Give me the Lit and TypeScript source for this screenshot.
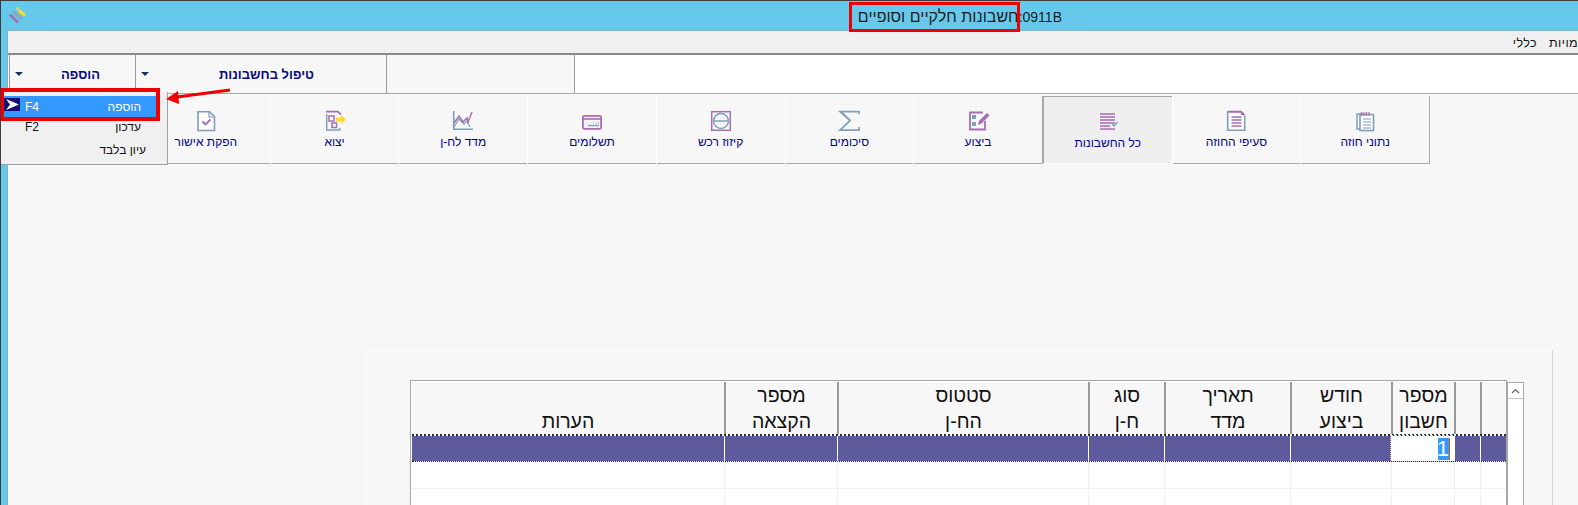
import { LitElement, html, css, svg } from "lit";
import { customElement } from "lit/decorators.js";

const B = "#7f9fb8";
const P = "#a56fb0";
const Y = "#ffd82a";

const icons = [
  svg`<rect x="4" y="6" width="5" height="15" fill="none" stroke="${B}" stroke-width="1.5"/><rect x="7" y="6.5" width="13.5" height="16" fill="#fff" stroke="${B}" stroke-width="1.6"/><path d="M8.5 4v4M11 4v4M13.5 4v4M16 4v4" stroke="${P}" stroke-width="1.2"/><path d="M10 11h8M10 14h8M10 17h8M10 20h8" stroke="${B}" stroke-width="1.2"/>`,
  svg`<path d="M3.7 3v19.3h17V8" fill="#fff" stroke="${B}" stroke-width="1.6"/><path d="M4 3.7h13l3.5 3.5" fill="none" stroke="${P}" stroke-width="2"/><path d="M17 3l4 4h-4z" fill="${P}"/><path d="M7.5 9h10M7.5 12h10M7.5 15h10M7.5 18h10" stroke="${P}" stroke-width="1.5"/>`,
  svg`<path d="M4 6h15M4 9h15M4 12h15M4 15h15M4 18h10M4 21h15" stroke="${P}" stroke-width="1.7"/><path d="M16 16l2 2 3.5-4" fill="none" stroke="${B}" stroke-width="1.4"/>`,
  svg`<path d="M17 4.5H4v17h15V13" fill="none" stroke="${P}" stroke-width="1.8"/><rect x="6" y="7" width="4" height="4" fill="${B}"/><rect x="6" y="14" width="4" height="4" fill="${B}"/><path d="M12 17l1-4 8-8 2.5 2.5-8 8z" fill="${P}"/>`,
  svg`<path d="M22 6V3.7H3l10 9-10 9.4h19V19" fill="none" stroke="${B}" stroke-width="1.7"/><path d="M5 4l9 8.5" stroke="${B}" stroke-width="1"/>`,
  svg`<rect x="2.7" y="3.7" width="18.6" height="18.6" fill="none" stroke="${P}" stroke-width="1.5"/><circle cx="12" cy="13" r="7.5" fill="none" stroke="${B}" stroke-width="1.5"/><path d="M5 13h14" stroke="${B}" stroke-width="1.5"/>`,
  svg`<rect x="2.9" y="7.9" width="18.2" height="13" rx="1.5" fill="#f7f0f8" stroke="${P}" stroke-width="1.8"/><path d="M3 11h18" stroke="${P}" stroke-width="1.6"/><path d="M8 17.5h11" stroke="${B}" stroke-width="1.4"/><path d="M13 15h1M16 15h1M18 15h1" stroke="${B}" stroke-width="1.2"/>`,
  svg`<path d="M2.7 3v18.3H22" fill="none" stroke="${B}" stroke-width="1.6"/><path d="M3 19l5-8 5 5 3-3 3 6" fill="none" stroke="${B}" stroke-width="1.2"/><path d="M3 15l5-7 4 6 4-4 1 4 4-10" fill="none" stroke="${P}" stroke-width="1.5"/>`,
  svg`<path d="M3.7 6v16h13v-2" fill="#f7f7f7" stroke="${B}" stroke-width="1.5"/><path d="M3 3.7h12l3 3" fill="none" stroke="${P}" stroke-width="1.8"/><rect x="6" y="8" width="5" height="5" fill="#fff" stroke="${P}" stroke-width="1.5"/><rect x="9" y="15" width="4.5" height="4.5" fill="#fff" stroke="${P}" stroke-width="1.5"/><path d="M13 9.5h5V7l5 4.5-5 4.5v-2.5h-5z" fill="${Y}"/>`,
  svg`<path d="M4 3.7h11.5l5 5v13.8H4z" fill="#fbfbfb" stroke="${B}" stroke-width="1.6"/><path d="M15 4v5h5.5" fill="none" stroke="${B}" stroke-width="1.2"/><path d="M8.5 13.5l3 3 5-5" fill="none" stroke="${P}" stroke-width="1.8"/>`,
];

const tabs: [string, number][] = [
  ["הפקת אישור", 9],
  ["יצוא", 8],
  ["מדד לח-ן", 7],
  ["תשלומים", 6],
  ["קיזוז רכש", 5],
  ["סיכומים", 4],
  ["ביצוע", 3],
  ["כל החשבונות", 2],
  ["סעיפי החוזה", 1],
  ["נתוני חוזה", 0],
];

const columns = [
  ["", "הערות"],
  ["מספר", "הקצאה"],
  ["סטטוס", "הח-ן"],
  ["סוג", "ח-ן"],
  ["תאריך", "מדד"],
  ["חודש", "ביצוע"],
  ["מספר", "חשבון"],
  ["", ""],
  ["", ""],
];

@customElement("app-root")
export class AppRoot extends LitElement {
  static styles = css`
    :host {
      display: block;
      position: relative;
      width: 1578px;
      height: 505px;
      overflow: hidden;
      background: #66c9ec;
      font-family: "Liberation Sans", Arial, sans-serif;
      box-sizing: border-box;
      border-top: 1px solid #3c3c3c;
      border-left: 1px solid #3c3c3c;
    }
    .titlebar {
      height: 29px;
      display: flex;
      align-items: center;
      position: relative;
    }
    .logo {
      margin-left: 7px;
      width: 20px;
      height: 20px;
      flex: none;
    }
    .title {
      margin-left: 830px;
      width: 204px;
      direction: rtl;
      font-size: 14px;
      line-height: 20px;
      color: #1c1c1c;
      white-space: nowrap;
      padding-top: 2px;
    }
    .title .he { font-size: 16px; }
    .main {
      margin-left: 6px;
      height: 475px;
      background: #f7f7f7;
      border-left: 1px solid #8fb0c4;
      border-top: 1px solid #8fb0c4;
      display: flex;
      flex-direction: column;
    }
    .menubar {
      height: 22px;
      flex: none;
      background: #f0f0f0;
      display: flex;
      justify-content: flex-end;
      align-items: center;
      gap: 12px;
      font-size: 12.5px;
      letter-spacing: 0.4px;
      color: #111;
      padding-top: 2px;
      box-sizing: border-box;
      margin-right: -7px;
    }
    .menubar span { flex: none; white-space: nowrap; }
    .toolbar {
      flex: none;
      display: flex;
      border-top: 2px solid #8a8a8a;
      border-bottom: 1px solid #a8a8a8;
      background: #fff;
      height: 38px;
    }
    .tool {
      flex: none;
      background: #f7f7f7;
      border-left: 1px solid #9a9a9a;
      box-sizing: border-box;
      display: flex;
      align-items: center;
      font-size: 13px;
      font-weight: bold;
      color: #0a0a80;
    }
    .tool.a { margin-left: 1px; width: 126px; }
    .tool.b { width: 251px; }
    .tool.c { width: 189px; border-right: 1px solid #9a9a9a; }
    .tri {
      width: 0;
      height: 0;
      border-left: 4px solid transparent;
      border-right: 4px solid transparent;
      border-top: 4px solid #14365e;
      margin-left: 5px;
      flex: none;
    }
    .tool .lbl { direction: rtl; white-space: nowrap; }
    .tool.a .lbl { margin-left: 38px; }
    .tool.b .lbl { margin-left: 70px; }
    .tabs {
      margin-top: 2px;
      height: 68px;
      flex: none;
      display: flex;
      margin-left: 133px;
      width: 1289px;
      box-sizing: border-box;
      border-bottom: 1px solid #a8a8a8;
      border-right: 1px solid #a8a8a8;
    }
    .tab {
      flex: 1 1 0;
      min-width: 0;
      height: 68px;
      box-sizing: border-box;
      border-left: 1px solid #fff;
      display: flex;
      flex-direction: column;
      align-items: center;
      padding-top: 12px;
      font-size: 12px;
      color: #00008b;
      direction: rtl;
      white-space: nowrap;
    }
    .tab svg { width: 24px; height: 24px; display: block; }
    .tab .t { margin-top: 3px; line-height: 14px; }
    .tab.on {
      background: #efefef;
      border: 1px solid #a8a8a8;
      border-width: 1px 0 0 2px;
      border-bottom: 1px solid #fff;
      padding-top: 11px;
    }
    .tab.on .t { margin-top: 4px; }
    .panel {
      margin: 186px 25px 0 358px;
      flex: 1;
      border-top: 1px solid #fff;
      border-left: 1px solid #fff;
      border-right: 1px solid #d6d6d6;
      padding: 29px 0 0 43px;
      display: flex;
      align-items: flex-start;
      overflow: hidden;
    }
    .grid {
      width: 1097px;
      height: 200px;
      flex: none;
      border: 1px solid #a6a6a6;
      border-bottom: 0;
      padding: 1px 0 0 1px;
      background: #fff;
      box-sizing: border-box;
    }
    .row {
      display: grid;
      grid-template-columns: 312px 113px 251px 76px 126px 101px 63px 26px 26px;
    }
    .hcell {
      height: 52px;
      background: #f7f7f7;
      border-left: 2px solid #999;
      box-sizing: border-box;
      text-align: center;
      direction: rtl;
      color: #111;
      font-size: 19.5px;
      line-height: 26px;
    }
    .hcell:first-child { border-left: 0; }
    .hcell div { height: 26px; }
    .sel {
      height: 28px;
      border-top: 2px dotted #2a2a2a;
      border-bottom: 1px dotted #2a2a2a;
      box-sizing: border-box;
    }
    .scell {
      background: #5d5b9b;
      border-left: 1px solid #fff;
      box-sizing: border-box;
    }
    .scell:first-child { border-left: 0; }
    .scell.cur {
      background: #fff;
      outline: 1px dotted #e8d800;
      direction: rtl;
      padding-right: 4px;
      display: flex;
      align-items: center;
      justify-content: flex-start;
    }
    .cursel {
      background: #3399ff;
      color: #fff;
      font-size: 22px;
      line-height: 22px;
      height: 22px;
      width: 11px;
      text-align: center;
      border-right: 1px solid #d06000;
    }
    .ecell {
      height: 27px;
      background: #fff;
      border-left: 1px solid #efefef;
      border-bottom: 1px solid #efefef;
      box-sizing: border-box;
    }
    .ecell:first-child { border-left: 0; }
    .scroll {
      width: 17px;
      height: 200px;
      flex: none;
      margin-top: 2px;
      box-sizing: border-box;
      border: 1px solid #a6a6a6;
      background: #fff;
    }
    .scroll .up {
      height: 15px;
      border-bottom: 1px solid #c8c8c8;
      display: flex;
      align-items: center;
      justify-content: center;
    }
    .dropdown {
      position: absolute;
      left: -1px;
      top: 91px;
      width: 167px;
      height: 68px;
      background: #f0f0f0;
      border: 1px solid #a0a0a0;
      border-left: 0;
      border-top: 0;
      font-size: 12px;
      color: #111;
      padding-top: 4px;
    }
    .mi {
      position: relative;
      display: flex;
      align-items: center;
      height: 21px;
      width: 153px;
      margin-left: 3px;
    }
    .mi.hi { background: #3399ff; color: #fff; }
    .mi .k { margin-left: 22px; width: 30px; font-size: 12px; }
    .mi .n { flex: 1; direction: rtl; padding-right: 15px; }
    .mi.r2 { height: 19px; }
    .mi.r3 { height: 25px; padding-top: 2px; box-sizing: border-box; }
    .mi.r3 .n { padding-right: 10px; }
    .mi .mark {
      position: absolute;
      left: 1px;
      top: 2px;
      width: 16px;
      height: 13px;
      background: #101070;
    }
    .redbox {
      position: absolute;
      border: 3px solid #ee0000;
      box-sizing: border-box;
    }
    .rb1 { left: 848px; top: 1px; width: 171px; height: 30px; }
    .rb2 { left: -1px; top: 87px; width: 160px; height: 33px; border-width: 4px; }
    .arrow {
      position: absolute;
      left: 160px;
      top: 84px;
      width: 75px;
      height: 24px;
    }
  `;

  render() {
    return html`
      <div class="titlebar">
        <svg class="logo" viewBox="0 0 20 20">
          <path d="M2 8.5l8 8" stroke="#a56fb0" stroke-width="3"/>
          <path d="M5.5 5.5l8.5 7" stroke="#86a9bd" stroke-width="3"/>
          <path d="M11 4.5l6 5" stroke="#ffd82a" stroke-width="3"/>
          <rect x="8.5" y="1.5" width="2.5" height="2.5" fill="#ffd82a"/>
        </svg>
        <div class="title">0911B:<span class="he">חשבונות חלקיים וסופיים</span></div>
      </div>
      <div class="main">
        <div class="menubar">
          <span dir="rtl">כללי</span>
          <span dir="rtl">כמויות</span>
        </div>
        <div class="toolbar">
          <div class="tool a"><span class="tri"></span><span class="lbl">הוספה</span></div>
          <div class="tool b"><span class="tri"></span><span class="lbl">טיפול בחשבונות</span></div>
          <div class="tool c"></div>
        </div>
        <div class="tabs">
          ${tabs.map(
            ([t, i]) => html`<div class="tab ${i === 2 ? "on" : ""}">
              <svg viewBox="0 0 24 24">${icons[i]}</svg><span class="t">${t}</span>
            </div>`
          )}
        </div>
        <div class="panel">
          <div class="grid">
            <div class="row">
              ${columns.map(
                (c) => html`<div class="hcell"><div>${c[0]}</div><div>${c[1]}</div></div>`
              )}
            </div>
            <div class="row sel">
              ${columns.map((_, i) =>
                i === 6
                  ? html`<div class="scell cur"><span class="cursel">1</span></div>`
                  : html`<div class="scell"></div>`
              )}
            </div>
            ${[0, 1].map(
              () => html`<div class="row">
                ${columns.map(() => html`<div class="ecell"></div>`)}
              </div>`
            )}
          </div>
          <div class="scroll">
            <div class="up">
              <svg width="9" height="6" viewBox="0 0 9 6"><path d="M1 5l3.5-3.5L8 5" fill="none" stroke="#606060" stroke-width="1.2"/></svg>
            </div>
          </div>
        </div>
      </div>
      <div class="dropdown">
        <div class="mi hi">
          <svg class="mark" viewBox="0 0 16 13">
            <path d="M2 1l13 5.5L2 12l4-5.5z" fill="#fff"/>
          </svg>
          <span class="k">F4</span><span class="n">הוספה</span>
        </div>
        <div class="mi r2"><span class="k">F2</span><span class="n">עדכון</span></div>
        <div class="mi r3"><span class="k"></span><span class="n">עיון בלבד</span></div>
      </div>
      <div class="redbox rb1"></div>
      <div class="redbox rb2"></div>
      <svg class="arrow" viewBox="0 0 75 24">
        <path d="M69 5L16 12" stroke="#ee0000" stroke-width="3"/>
        <path d="M5 14L17 6l1 13z" fill="#ee0000"/>
      </svg>
    `;
  }
}
